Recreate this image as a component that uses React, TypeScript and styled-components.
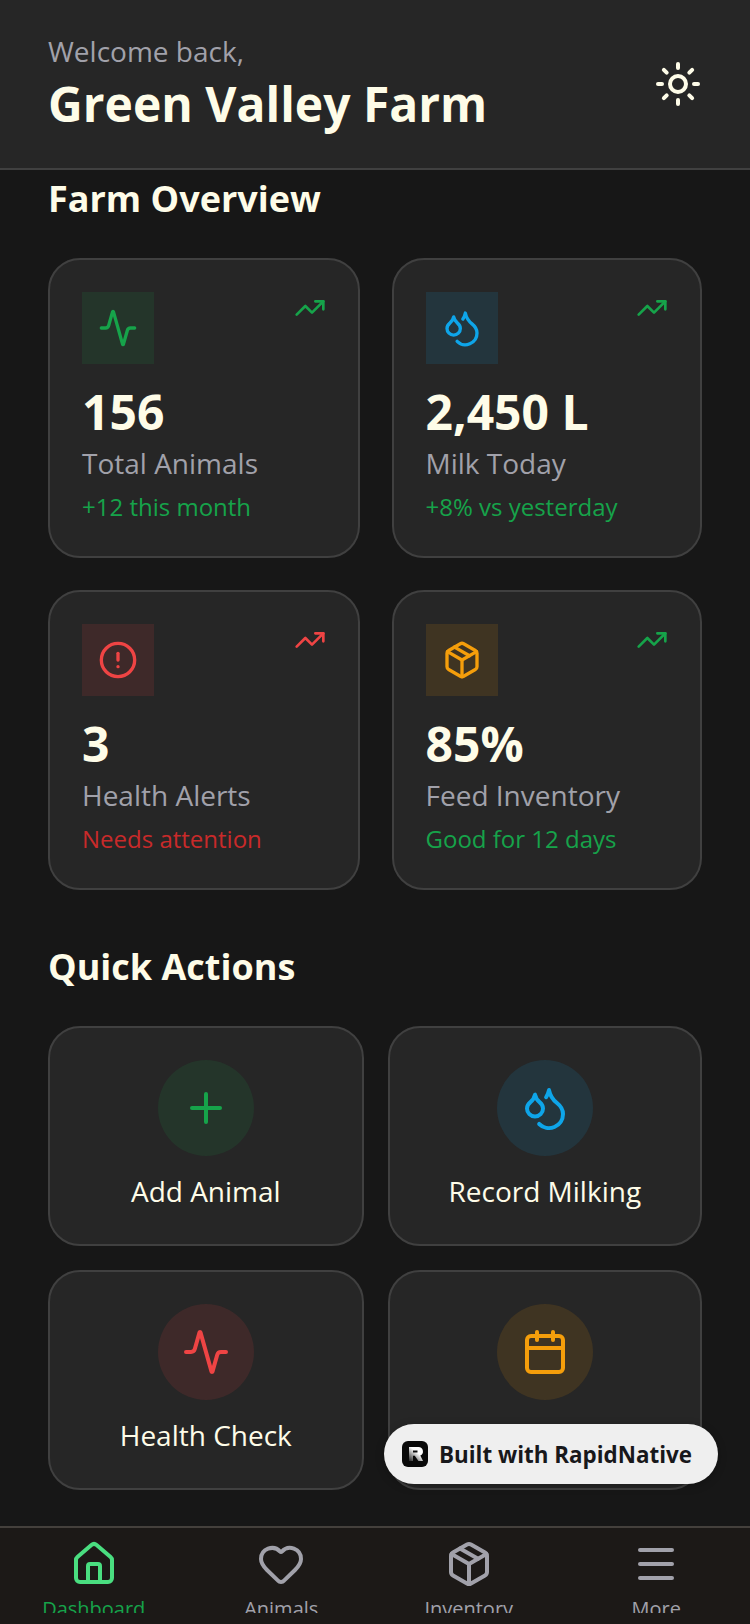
import React from 'react';
import styled, {createGlobalStyle} from 'styled-components';
import {Activity, Calendar, CircleAlert, Droplets, Heart, House, Menu, Package, Plus, Sun, TrendingUp} from 'lucide-react';

const GlobalStyle = createGlobalStyle`
  html, body {
    margin: 0;
    padding: 0;
    background: #171717;
  }
  * {
    box-sizing: border-box;
  }
`

const GREEN = '#16a34a';
const BLUE = '#0ea5e9';
const RED = '#ef4444';
const AMBER = '#f59e0b';

const Screen = styled.div`
  position: relative;
  width: 750px;
  height: 1624px;
  display: flex;
  flex-direction: column;
  overflow: hidden;
  background: #171717;
  font-family: "Open Sans", sans-serif;
`

const Header = styled.header`
  height: 170px;
  flex-shrink: 0;
  display: flex;
  align-items: center;
  justify-content: space-between;
  padding: 0 48px;
  background: #262626;
  border-bottom: 2px solid #404040;
`

const Welcome = styled.div`
  font-size: 28px;
  line-height: 38px;
  margin-bottom: 2px;
  color: #a1a1aa;
`

const FarmName = styled.div`
  font-size: 48px;
  line-height: 64px;
  font-weight: 700;
  color: #fefce8;
`

const SunButton = styled.div`
  display: flex;
  color: #fefce8;
`

const Main = styled.main`
  flex: 1;
  overflow: hidden;
  padding: 5px 48px 0;
`

const SectionTitle = styled.h2`
  margin: 0;
  font-size: 36px;
  line-height: 48px;
  font-weight: 700;
  color: #fefce8;
`

const StatGrid = styled.div`
  display: grid;
  grid-template-columns: 311.5fr 310.5fr;
  gap: 32px;
  margin: 35px 0 53px;
`

const StatCard = styled.div`
  height: 300px;
  padding: 32px;
  background: #262626;
  border: 2px solid #404040;
  border-radius: 32px;
`

const StatTop = styled.div`
  display: flex;
  align-items: flex-start;
  justify-content: space-between;
  margin-bottom: 16px;
`

const IconBox = styled.div<{$color: string}>`
  width: 72px;
  height: 72px;
  display: flex;
  align-items: center;
  justify-content: center;
  color: ${p => p.$color};
  background: ${p => p.$color}1f;
`

const Trend = styled.div<{$color: string}>`
  display: flex;
  color: ${p => p.$color};
`

const StatValue = styled.div`
  font-size: 48px;
  line-height: 64px;
  font-weight: 700;
  color: #fefce8;
`

const StatLabel = styled.div`
  margin-top: -1px;
  font-size: 28px;
  line-height: 40px;
  color: #a1a1aa;
`

const StatNote = styled.div<{$color: string}>`
  margin-top: 8px;
  font-size: 24px;
  line-height: 32px;
  color: ${p => p.$color};
`

const ActionGrid = styled.div`
  display: grid;
  grid-template-columns: 315.6fr 314.4fr;
  gap: 24px;
  margin-top: 35px;
`

const ActionCard = styled.div`
  height: 220px;
  padding-top: 32px;
  display: flex;
  flex-direction: column;
  align-items: center;
  background: #262626;
  border: 2px solid #404040;
  border-radius: 32px;
`

const ActionCircle = styled.div<{$color: string}>`
  width: 96px;
  height: 96px;
  display: flex;
  align-items: center;
  justify-content: center;
  border-radius: 50%;
  color: ${p => p.$color};
  background: ${p => p.$color}1f;
`

const ActionLabel = styled.div`
  margin-top: 16px;
  font-size: 28px;
  line-height: 38px;
  color: #fefce8;
`

const TabBar = styled.nav`
  height: 98px;
  flex-shrink: 0;
  display: grid;
  grid-template-columns: repeat(4, 1fr);
  background: #1c1917;
  border-top: 2px solid #44403c;
`

const Tab = styled.div<{$active?: boolean}>`
  height: 85px;
  padding-top: 12px;
  display: flex;
  flex-direction: column;
  align-items: center;
  overflow: hidden;
  color: ${p => p.$active ? '#4ade80' : '#a1a1aa'};

  svg {
    flex-shrink: 0;
  }
`

const TabLabel = styled.div<{$active?: boolean}>`
  font-size: 20px;
  line-height: 28px;
  margin-top: 7px;
  color: ${p => p.$active ? GREEN : '#a1a1aa'};
`

const Badge = styled.div`
  position: absolute;
  left: 384px;
  top: 1424px;
  width: 334px;
  height: 60px;
  display: flex;
  align-items: center;
  gap: 11px;
  padding-left: 18px;
  border-radius: 30px;
  background: #efefef;
  box-shadow: 0 2px 8px rgba(0, 0, 0, 0.25);
  font-size: 22.4px;
  font-weight: 700;
  color: #18181b;
`

const stats = [
    {icon: Activity, color: GREEN, trend: GREEN, value: '156', label: 'Total Animals', note: '+12 this month', noteColor: GREEN},
    {icon: Droplets, color: BLUE, trend: GREEN, value: '2,450 L', label: 'Milk Today', note: '+8% vs yesterday', noteColor: GREEN},
    {icon: CircleAlert, color: RED, trend: RED, value: '3', label: 'Health Alerts', note: 'Needs attention', noteColor: '#c92a2a'},
    {icon: Package, color: AMBER, trend: GREEN, value: '85%', label: 'Feed Inventory', note: 'Good for 12 days', noteColor: GREEN},
];

const actions = [
    {icon: Plus, color: GREEN, label: 'Add Animal'},
    {icon: Droplets, color: BLUE, label: 'Record Milking'},
    {icon: Activity, color: RED, label: 'Health Check'},
    {icon: Calendar, color: AMBER, label: 'Schedule'},
];

const tabs = [
    {icon: House, label: 'Dashboard', active: true},
    {icon: Heart, label: 'Animals'},
    {icon: Package, label: 'Inventory'},
    {icon: Menu, label: 'More'},
];

const App = () => {
    return (
        <Screen>
            <GlobalStyle/>
            <Header>
                <div>
                    <Welcome>Welcome back,</Welcome>
                    <FarmName>Green Valley Farm</FarmName>
                </div>
                <SunButton><Sun size={48}/></SunButton>
            </Header>
            <Main>
                <SectionTitle>Farm Overview</SectionTitle>
                <StatGrid>
                    {stats.map(s => (
                        <StatCard key={s.label}>
                            <StatTop>
                                <IconBox $color={s.color}><s.icon size={40}/></IconBox>
                                <Trend $color={s.trend}><TrendingUp size={32}/></Trend>
                            </StatTop>
                            <StatValue>{s.value}</StatValue>
                            <StatLabel>{s.label}</StatLabel>
                            <StatNote $color={s.noteColor}>{s.note}</StatNote>
                        </StatCard>
                    ))}
                </StatGrid>
                <SectionTitle>Quick Actions</SectionTitle>
                <ActionGrid>
                    {actions.map(a => (
                        <ActionCard key={a.label}>
                            <ActionCircle $color={a.color}><a.icon size={48}/></ActionCircle>
                            <ActionLabel>{a.label}</ActionLabel>
                        </ActionCard>
                    ))}
                </ActionGrid>
            </Main>
            <TabBar>
                {tabs.map(t => (
                    <Tab key={t.label} $active={t.active}>
                        <t.icon size={48}/>
                        <TabLabel $active={t.active}>{t.label}</TabLabel>
                    </Tab>
                ))}
            </TabBar>
            <Badge>
                <svg width="26" height="26" viewBox="0 0 26 26">
                    <defs>
                        <linearGradient id="logoFade" x1="0.6" y1="0.4" x2="0.1" y2="1">
                            <stop offset="0" stopColor="#fff"/>
                            <stop offset="1" stopColor="#333"/>
                        </linearGradient>
                    </defs>
                    <rect width="26" height="26" rx="6" fill="#0a0a0a"/>
                    <path d="M7 6h9.5a4.5 4.5 0 0 1 1.8 8.6L21 20h-4.6l-3.6-5.2H11V20H7z" fill="url(#logoFade)"/>
                    <rect x="11" y="9.5" width="4.5" height="2" fill="#0a0a0a"/>
                </svg>
                Built with RapidNative
            </Badge>
        </Screen>
    );
};

export default App;
